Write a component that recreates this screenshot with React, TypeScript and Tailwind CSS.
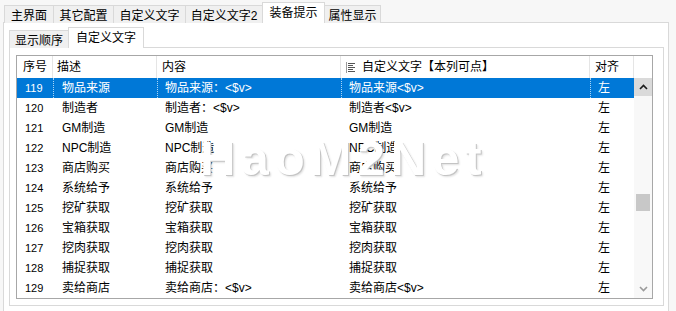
import React from 'react';

const mainTabs = [
  { label: '主界面', w: 'w-[50px]' },
  { label: '其它配置', w: 'w-[61px]' },
  { label: '自定义文字', w: 'w-[73px]' },
  { label: '自定义文字2', w: 'w-[78px]' },
  { label: '装备提示', w: 'w-[63px]', active: true },
  { label: '属性显示', w: 'w-[57px]' },
];

const subTabs = [
  { label: '显示顺序', w: 'w-[60px]' },
  { label: '自定义文字', w: 'w-[76px]', active: true },
];

const rows = [
  ['119', '物品来源', '物品来源：<$v>', '物品来源<$v>'],
  ['120', '制造者', '制造者：<$v>', '制造者<$v>'],
  ['121', 'GM制造', 'GM制造', 'GM制造'],
  ['122', 'NPC制造', 'NPC制造', 'NPC制造'],
  ['123', '商店购买', '商店购买', '商店购买'],
  ['124', '系统给予', '系统给予', '系统给予'],
  ['125', '挖矿获取', '挖矿获取', '挖矿获取'],
  ['126', '宝箱获取', '宝箱获取', '宝箱获取'],
  ['127', '挖肉获取', '挖肉获取', '挖肉获取'],
  ['128', '捕捉获取', '捕捉获取', '捕捉获取'],
  ['129', '卖给商店', '卖给商店：<$v>', '卖给商店<$v>'],
];

function Tab({ label, w, active }: { label: string; w: string; active?: boolean }) {
  return active ? (
    <div className={`${w} relative z-10 -ml-px flex h-[21px] items-start justify-center border border-b-0 border-[#d9d9d9] bg-white pt-[2px] leading-[16px]`}>
      {label}
    </div>
  ) : (
    <div className={`${w} -ml-px flex h-[18px] items-start justify-center border border-b-0 border-[#d9d9d9] bg-[#f0f0f0] pt-[2px] leading-[16px]`}>
      {label}
    </div>
  );
}

function ColumnIcon() {
  return (
    <svg width="10" height="11" viewBox="0 0 10 11" className="mr-[6px] shrink-0">
      <rect x="0" y="0" width="1" height="11" fill="#9a9a9a" />
      <rect x="2" y="1" width="7" height="1" fill="#555" />
      <rect x="2" y="3" width="5" height="1" fill="#555" />
      <rect x="2" y="5" width="7" height="1" fill="#555" />
      <rect x="2" y="7" width="5" height="1" fill="#555" />
      <rect x="2" y="9" width="7" height="1" fill="#555" />
    </svg>
  );
}

function Chevron({ up, color }: { up?: boolean; color: string }) {
  return (
    <svg width="9" height="6" viewBox="0 0 9 6">
      <polyline
        points={up ? '1,5 4.5,1.5 8,5' : '1,1 4.5,4.5 8,1'}
        fill="none"
        stroke={color}
        strokeWidth="1.6"
      />
    </svg>
  );
}

export default function App() {
  return (
    <div className="relative h-[311px] w-[676px] overflow-hidden bg-[#f7f7f7] font-['Liberation_Sans','Noto_Sans_CJK_SC',sans-serif] text-[12px] text-black">
      {/* main tab strip */}
      <div className="flex h-[23px] items-end pl-[5px]">
        {mainTabs.map(t => (
          <Tab key={t.label} {...t} />
        ))}
      </div>

      {/* outer tab page */}
      <div className="-mt-px ml-[3px] h-[300px] w-[666px] border border-[#d9d9d9] bg-white pl-[5px]">
        <div className="flex h-[25px] items-end pl-px">
          {subTabs.map(t => (
            <Tab key={t.label} {...t} />
          ))}
        </div>

        {/* inner tab page */}
        <div className="-mt-px h-[259px] w-[655px] border border-[#d9d9d9] bg-white pl-[6px] pt-[7px]">
          <div className="w-[637px] border border-[#a7a7a7] bg-white">
            {/* header */}
            <div className="flex h-[22px] leading-[22px]">
              <div className="w-[36px] border-r border-[#e5e5e5] pl-[6px]">序号</div>
              <div className="w-[104px] border-r border-[#e5e5e5] pl-[4px]">描述</div>
              <div className="w-[184px] border-r border-[#e5e5e5] pl-[5px]">内容</div>
              <div className="flex w-[249px] items-center border-r border-[#e5e5e5] pl-[5px]">
                <ColumnIcon />
                自定义文字【本列可点】
              </div>
              <div className="w-[44px] border-r border-[#e5e5e5] pl-[5px]">对齐</div>
              <div className="flex-1" />
            </div>

            {/* body */}
            <div className="flex">
              <div className="w-[617px]">
                {rows.map((r, i) => {
                  const sel = i === 0;
                  const cell = sel
                    ? 'border-l border-dotted border-[#a8d4f5]'
                    : 'border-l border-transparent';
                  return (
                    <div
                      key={r[0]}
                      className={`flex h-[20px] leading-[20px] ${sel ? 'bg-[#0078d7] text-white' : ''}`}
                    >
                      <div className="w-[36px] pl-[8px] text-[11px]">{r[0]}</div>
                      <div className={`w-[104px] pl-[8px] ${cell}`}>{r[1]}</div>
                      <div className={`w-[184px] pl-[7px] ${cell}`}>{r[2]}</div>
                      <div className={`w-[249px] pl-[7px] ${cell}`}>{r[3]}</div>
                      <div className={`w-[44px] pl-[7px] ${cell}`}>左</div>
                    </div>
                  );
                })}
              </div>

              {/* scrollbar */}
              <div className="flex h-[220px] w-[18px] flex-col bg-[#f8f8f8]">
                <div className="flex h-[18px] items-center justify-center bg-[#dadada]">
                  <Chevron up color="#1a1a1a" />
                </div>
                <div className="h-[98px]" />
                <div className="mx-[2px] h-[17px] bg-[#c8c8c8]" />
                <div className="flex-1" />
                <div className="flex h-[18px] items-center justify-center">
                  <Chevron color="#9a9a9a" />
                </div>
              </div>
            </div>
          </div>
        </div>
      </div>

      {/* watermark */}
      <div className="pointer-events-none absolute left-[200px] top-[134px] z-20 font-['Liberation_Sans',sans-serif] text-[49px] font-bold leading-none tracking-[6px] text-white [text-shadow:1px_1px_0_#c4c4c4,2px_2px_2px_rgba(0,0,0,0.12)]">
        HaoM2Net
      </div>
    </div>
  );
}
